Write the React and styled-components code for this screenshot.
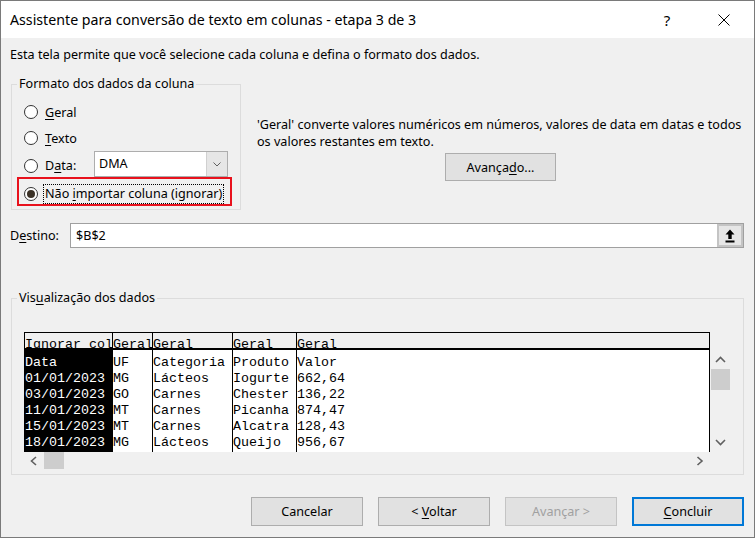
import styled, { createGlobalStyle } from "styled-components";

const GlobalStyle = createGlobalStyle`
  * {
    box-sizing: border-box;
  }

  html,
  body {
    margin: 0;
    padding: 0;
    background: #f0f0f0;
  }
`;

const UI_FONT = `"Noto Sans", "Open Sans", sans-serif`;
const MONO_FONT = `"Liberation Mono", "DejaVu Sans Mono", monospace`;

const columns = [
  {
    format: "Ignorar col",
    width: 87,
    selected: true,
    values: ["Data", "01/01/2023", "03/01/2023", "11/01/2023", "15/01/2023", "18/01/2023"],
  },
  { format: "Geral", width: 40, values: ["UF", "MG", "GO", "MT", "MT", "MG"] },
  {
    format: "Geral",
    width: 80,
    values: ["Categoria", "Lácteos", "Carnes", "Carnes", "Carnes", "Lácteos"],
  },
  {
    format: "Geral",
    width: 64,
    values: ["Produto", "Iogurte", "Chester", "Picanha", "Alcatra", "Queijo"],
  },
  { format: "Geral", width: null, values: ["Valor", "662,64", "136,22", "874,47", "128,43", "956,67"] },
];

const StyledWindow = styled.div`
  width: 755px;
  height: 538px;

  display: flex;
  flex-direction: column;

  border: 1px solid #7a7a7a;
  background: #f0f0f0;
  color: #000;
  font-family: ${UI_FONT};
  font-size: 12.6px;
`;

const StyledTitleBar = styled.div`
  height: 37px;
  padding: 0 7px 0 9px;

  display: flex;
  align-items: center;
  gap: 11px;

  background: #fff;
  font-size: 14.2px;
`;

const StyledTitle = styled.div`
  flex: 1;
  white-space: nowrap;
`;

const StyledTitleButton = styled.div`
  width: 46px;
  height: 37px;

  display: grid;
  place-items: center;

  font-size: 15px;
`;

const StyledBody = styled.div`
  flex: 1;
  padding: 9px 10px 0 10px;

  display: flex;
  flex-direction: column;
`;

const StyledIntro = styled.div`
  margin-left: -1px;
  line-height: 16px;
  white-space: nowrap;
`;

const Key = styled.u`
  text-decoration: underline;
  text-underline-offset: 2px;
`;

const StyledTop = styled.div`
  margin-top: 13px;

  display: grid;
  grid-template-columns: 230px 1fr;
  column-gap: 16px;
`;

const StyledGroup = styled.fieldset`
  min-width: 0;
  margin: 0;
  padding: ${(p) => p.$padding};

  border: 1px solid #dcdcdc;
`;

const StyledLegend = styled.legend`
  padding: 0 2px;

  line-height: 16px;
`;

const StyledOption = styled.div`
  height: 26px;
  padding-left: 7px;

  display: flex;
  align-items: center;
  gap: 7px;
`;

const StyledChoice = styled.div`
  padding-top: ${(p) => (p.$nudge ? "3px" : "0")};

  display: flex;
  align-items: center;
  gap: 7px;
`;

const StyledRadio = styled.span`
  width: 14px;
  height: 14px;
  flex-shrink: 0;

  display: grid;
  place-items: center;

  border: 1px solid #333;
  border-radius: 50%;
  background: #fff;

  &::after {
    content: "";
    width: 8px;
    height: 8px;

    display: ${(p) => (p.$checked ? "block" : "none")};

    border-radius: 50%;
    background: #3a3126;
  }
`;

const StyledDataLabel = styled.span`
  width: 42px;
`;

const StyledSelect = styled.div`
  width: 134px;
  height: 26px;

  display: flex;

  border: 1px solid #adadad;
  background: #fff;
`;

const StyledSelectValue = styled.div`
  flex: 1;
  padding-left: 4px;

  line-height: 24px;
`;

const StyledSelectArrow = styled.div`
  width: 21px;

  display: grid;
  place-items: center;

  border-left: 1px solid #d0d0d0;
  background: #e6e6e6;
`;

const StyledHighlight = styled.div`
  height: 29px;
  padding: 4px 0 0 5px;

  display: flex;
  align-items: center;
  gap: 5px;

  border: 2px solid #e8111c;
`;

const StyledFocusLabel = styled.span`
  padding: 0 1px;

  line-height: 18px;
  white-space: nowrap;

  border: 1px dotted #000;
`;

const StyledHelp = styled.div`
  padding-top: 40px;

  display: flex;
  flex-direction: column;
`;

const StyledHelpText = styled.div`
  line-height: 17px;
  white-space: nowrap;
`;

const StyledButton = styled.button`
  width: ${(p) => p.$width || 112}px;
  height: ${(p) => p.$height || 29}px;
  padding: 0;

  font-family: ${UI_FONT};
  font-size: 12.6px;
  color: ${(p) => (p.disabled ? "#a0a0a0" : "#000")};

  background: #e1e1e1;
  border: ${(p) =>
    p.$primary ? "2px solid #0078d7" : p.disabled ? "1px solid #c4c4c4" : "1px solid #adadad"};
`;

const StyledAdvanced = styled(StyledButton)`
  margin-top: 3px;
  align-self: center;
`;

const StyledDestRow = styled.div`
  margin-top: 13px;

  display: flex;
  align-items: center;
`;

const StyledDestLabel = styled.span`
  width: 60px;
  margin-left: -1px;
`;

const StyledInput = styled.div`
  flex: 1;
  height: 25px;

  display: flex;

  border: 1px solid #a0a0a0;
  background: #fff;
`;

const StyledInputValue = styled.div`
  flex: 1;
  padding-left: 5px;

  line-height: 23px;
`;

const StyledRefButton = styled.div`
  width: 26px;

  display: grid;
  place-items: center;

  border: 2px solid #c4c4c4;
  background: #e6e6e6;
`;

const StyledPreviewGroup = styled(StyledGroup)`
  margin-top: 42px;
`;

const StyledPreview = styled.div`
  margin-left: 7px;

  display: grid;
  grid-template-columns: 686px 21px;
  grid-template-rows: 18px 102px 17px;
`;

const StyledHeadRow = styled.div`
  grid-column: 1;
  grid-row: 1;

  display: flex;
  overflow: hidden;

  border: 1px solid #000;
  border-bottom-width: 2px;
  background: #f0f0f0;
`;

const StyledBodyRow = styled.div`
  grid-column: 1;
  grid-row: 2;

  display: flex;
  overflow: hidden;

  border-left: 1px solid #000;
  border-right: 1px solid #000;
  background: #fff;
`;

const StyledCell = styled.div`
  flex: ${(p) => (p.$width ? `0 0 ${p.$width}px` : "1 1 auto")};
  min-width: 0;
  overflow: hidden;

  border-left: ${(p) => (p.$first ? "none" : "1px solid #000")};
  font-family: ${MONO_FONT};
  font-size: 13.33px;
  white-space: pre;
`;

const StyledHeadCell = styled(StyledCell)`
  height: 15px;
  padding-top: 4px;

  line-height: 15px;
`;

const StyledBodyColumn = styled(StyledCell)`
  padding-top: 5px;

  line-height: 16px;
  background: ${(p) => (p.$selected ? "#000" : "#fff")};
  color: ${(p) => (p.$selected ? "#fff" : "#000")};
`;

const StyledVScroll = styled.div`
  grid-column: 2;
  grid-row: 2;

  display: flex;
  flex-direction: column;
`;

const StyledHScroll = styled.div`
  grid-column: 1;
  grid-row: 3;

  display: flex;
`;

const StyledArrow = styled.div`
  width: ${(p) => (p.$vertical ? "21px" : "20px")};
  height: ${(p) => (p.$vertical ? "19px" : "17px")};

  display: grid;
  place-items: center;
`;

const StyledThumb = styled.div`
  width: ${(p) => (p.$vertical ? "19px" : "20px")};
  height: ${(p) => (p.$vertical ? "21px" : "17px")};
  margin-left: ${(p) => (p.$vertical ? "1px" : "0")};

  background: #cdcdcd;
`;

const StyledSpacer = styled.div`
  flex: 1;
`;

const StyledActions = styled.div`
  margin-top: 22px;

  display: flex;
  justify-content: flex-end;
  gap: 15px;
`;

const Chevron = ({ dir }) => {
  const points = {
    up: "1,6 5.5,1.5 10,6",
    down: "1,1 5.5,5.5 10,1",
    left: "6,1 1.5,5 6,9",
    right: "1.5,1 6,5 1.5,9",
  }[dir];
  const vertical = dir === "up" || dir === "down";

  return (
    <svg width={vertical ? 11 : 8} height={vertical ? 7 : 10} viewBox={vertical ? "0 0 11 7" : "0 0 8 10"}>
      <polyline points={points} fill="none" stroke="#606060" strokeWidth="1.6" />
    </svg>
  );
};

const Radio = ({ checked }) => <StyledRadio $checked={checked} />;

const App = () => {
  return (
    <StyledWindow>
      <GlobalStyle />

      <StyledTitleBar>
        <StyledTitle>Assistente para conversão de texto em colunas - etapa 3 de 3</StyledTitle>
        <StyledTitleButton>?</StyledTitleButton>
        <StyledTitleButton>
          <svg width="12" height="12" viewBox="0 0 12 12">
            <path d="M0.5 0.5 L11.5 11.5 M11.5 0.5 L0.5 11.5" stroke="#000" strokeWidth="1" />
          </svg>
        </StyledTitleButton>
      </StyledTitleBar>

      <StyledBody>
        <StyledIntro>
          Esta tela permite que você selecione cada coluna e defina o formato dos dados.
        </StyledIntro>

        <StyledTop>
          <StyledGroup $padding="7px 8px 3px 5px">
            <StyledLegend>Formato dos dados da coluna</StyledLegend>

            <StyledOption>
              <Radio />
              <span>
                <Key>G</Key>eral
              </span>
            </StyledOption>
            <StyledOption>
              <Radio />
              <span>
                <Key>T</Key>exto
              </span>
            </StyledOption>
            <StyledOption>
              <StyledChoice $nudge>
                <Radio />
                <StyledDataLabel>
                  D<Key>a</Key>ta:
                </StyledDataLabel>
              </StyledChoice>
              <StyledSelect>
                <StyledSelectValue>DMA</StyledSelectValue>
                <StyledSelectArrow>
                  <svg width="8" height="5" viewBox="0 0 8 5">
                    <polyline points="0.5,0.5 4,4 7.5,0.5" fill="none" stroke="#606060" strokeWidth="1" />
                  </svg>
                </StyledSelectArrow>
              </StyledSelect>
            </StyledOption>
            <StyledHighlight>
              <Radio checked />
              <StyledFocusLabel>
                Não <Key>i</Key>mportar coluna (ignorar)
              </StyledFocusLabel>
            </StyledHighlight>
          </StyledGroup>

          <StyledHelp>
            <StyledHelpText>
              'Geral' converte valores numéricos em números, valores de data em datas e todos
              <br />
              os valores restantes em texto.
            </StyledHelpText>
            <StyledAdvanced $width={111} $height={28}>
              Avança<Key>d</Key>o...
            </StyledAdvanced>
          </StyledHelp>
        </StyledTop>

        <StyledDestRow>
          <StyledDestLabel>
            D<Key>e</Key>stino:
          </StyledDestLabel>
          <StyledInput>
            <StyledInputValue>$B$2</StyledInputValue>
            <StyledRefButton>
              <svg width="10" height="14" viewBox="0 0 10 14">
                <path d="M5 0.5 L0.5 5.5 H3.3 V10 H6.7 V5.5 H9.5 Z" fill="#000" />
                <rect x="0.5" y="11.5" width="9" height="2" fill="#000" />
              </svg>
            </StyledRefButton>
          </StyledInput>
        </StyledDestRow>

        <StyledPreviewGroup $padding="26px 0 5px 5px">
          <StyledLegend>
            Vis<Key>u</Key>alização dos dados
          </StyledLegend>

          <StyledPreview>
            <StyledHeadRow>
              {columns.map((column, index) => (
                <StyledHeadCell key={index} $width={column.width} $first={index === 0}>
                  {column.format}
                </StyledHeadCell>
              ))}
            </StyledHeadRow>

            <StyledBodyRow>
              {columns.map((column, index) => (
                <StyledBodyColumn
                  key={index}
                  $width={column.width}
                  $first={index === 0}
                  $selected={column.selected}
                >
                  {column.values.map((value, row) => (
                    <div key={row}>{value}</div>
                  ))}
                </StyledBodyColumn>
              ))}
            </StyledBodyRow>

            <StyledVScroll>
              <StyledArrow $vertical>
                <Chevron dir="up" />
              </StyledArrow>
              <StyledThumb $vertical />
              <StyledSpacer />
              <StyledArrow $vertical>
                <Chevron dir="down" />
              </StyledArrow>
            </StyledVScroll>

            <StyledHScroll>
              <StyledArrow>
                <Chevron dir="left" />
              </StyledArrow>
              <StyledThumb />
              <StyledSpacer />
              <StyledArrow>
                <Chevron dir="right" />
              </StyledArrow>
            </StyledHScroll>
          </StyledPreview>
        </StyledPreviewGroup>

        <StyledActions>
          <StyledButton>Cancelar</StyledButton>
          <StyledButton>
            &lt; <Key>V</Key>oltar
          </StyledButton>
          <StyledButton disabled>Avançar &gt;</StyledButton>
          <StyledButton $primary>
            <Key>C</Key>oncluir
          </StyledButton>
        </StyledActions>
      </StyledBody>
    </StyledWindow>
  );
};

export default App;
